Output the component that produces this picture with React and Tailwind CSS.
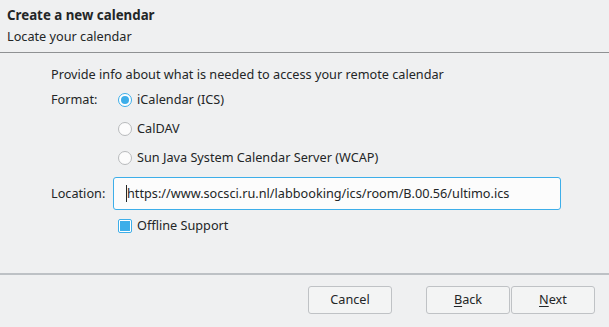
import React from "react";

const formats = ["iCalendar (ICS)", "CalDAV", "Sun Java System Calendar Server (WCAP)"];

const Radio = ({ checked }) => (
  <span
    className={`w-[14px] h-[14px] rounded-full border flex items-center justify-center shrink-0 ${
      checked ? "border-[#3daee9] bg-white" : "border-[#b8babc] bg-[#fcfcfc]"
    }`}
  >
    {checked && <span className="w-[8px] h-[8px] rounded-full bg-[#3daee9]" />}
  </span>
);

const Button = ({ children, className = "" }) => (
  <button
    className={`w-[84px] h-[28px] rounded-[3px] border border-[#bfc2c5] bg-[#f3f4f4] text-[12.7px] text-[#232627] ${className}`}
  >
    {children}
  </button>
);

export default function App() {
  return (
    <div
      className="w-[609px] h-[327px] bg-[#eff0f1] text-[#232627] flex flex-col overflow-hidden"
      style={{ fontFamily: '"Noto Sans", "Open Sans", sans-serif' }}
    >
      {/* header */}
      <div className="h-[52px] pl-[7px] pt-[6px]">
        <div className="text-[13.3px] font-bold leading-[18px]">Create a new calendar</div>
        <div className="text-[12.7px] leading-[18px] mt-[3px]">Locate your calendar</div>
      </div>
      <div className="h-px bg-[#8f9193]" />

      {/* body */}
      <div className="flex-1 pl-[51px] text-[12.7px]">
        <div className="leading-[18px] mt-[12px]">
          Provide info about what is needed to access your remote calendar
        </div>

        <div className="flex mt-[3px]">
          <div className="w-[62px] h-[28px] flex items-center">Format:</div>
          <div className="flex flex-col">
            {formats.map((f, i) => (
              <div
                key={f}
                className={`${i === 0 ? "h-[28px]" : "h-[29px]"} flex items-center pl-[5px] gap-[5px]`}
              >
                <Radio checked={i === 0} />
                <span>{f}</span>
              </div>
            ))}
          </div>
        </div>

        <div className="flex items-center mt-[5px]">
          <div className="w-[62px]">Location:</div>
          <div className="w-[448px] h-[33px] rounded-[3px] border border-[#3daee9] bg-[#fcfcfc] flex items-center pl-[12px]">
            <span className="w-px h-[17px] bg-[#232627]" />
            <span>https://www.socsci.ru.nl/labbooking/ics/room/B.00.56/ultimo.ics</span>
          </div>
        </div>

        <div className="flex items-center mt-[7px] pl-[67px] h-[18px] gap-[5px]">
          <span className="w-[14px] h-[14px] rounded-[2px] border border-[#3daee9] bg-white flex items-center justify-center">
            <span className="w-[10px] h-[10px] bg-[#3daee9]" />
          </span>
          <span>Offline Support</span>
        </div>
      </div>

      {/* footer */}
      <div className="h-[2px] bg-[#bdc1c5]" />
      <div className="h-[52px] flex items-start pt-[11px]">
        <Button className="ml-[308px]">Cancel</Button>
        <Button className="ml-[34px]">
          <span className="underline underline-offset-2">B</span>ack
        </Button>
        <Button className="ml-px">
          <span className="underline underline-offset-2">N</span>ext
        </Button>
      </div>
    </div>
  );
}
